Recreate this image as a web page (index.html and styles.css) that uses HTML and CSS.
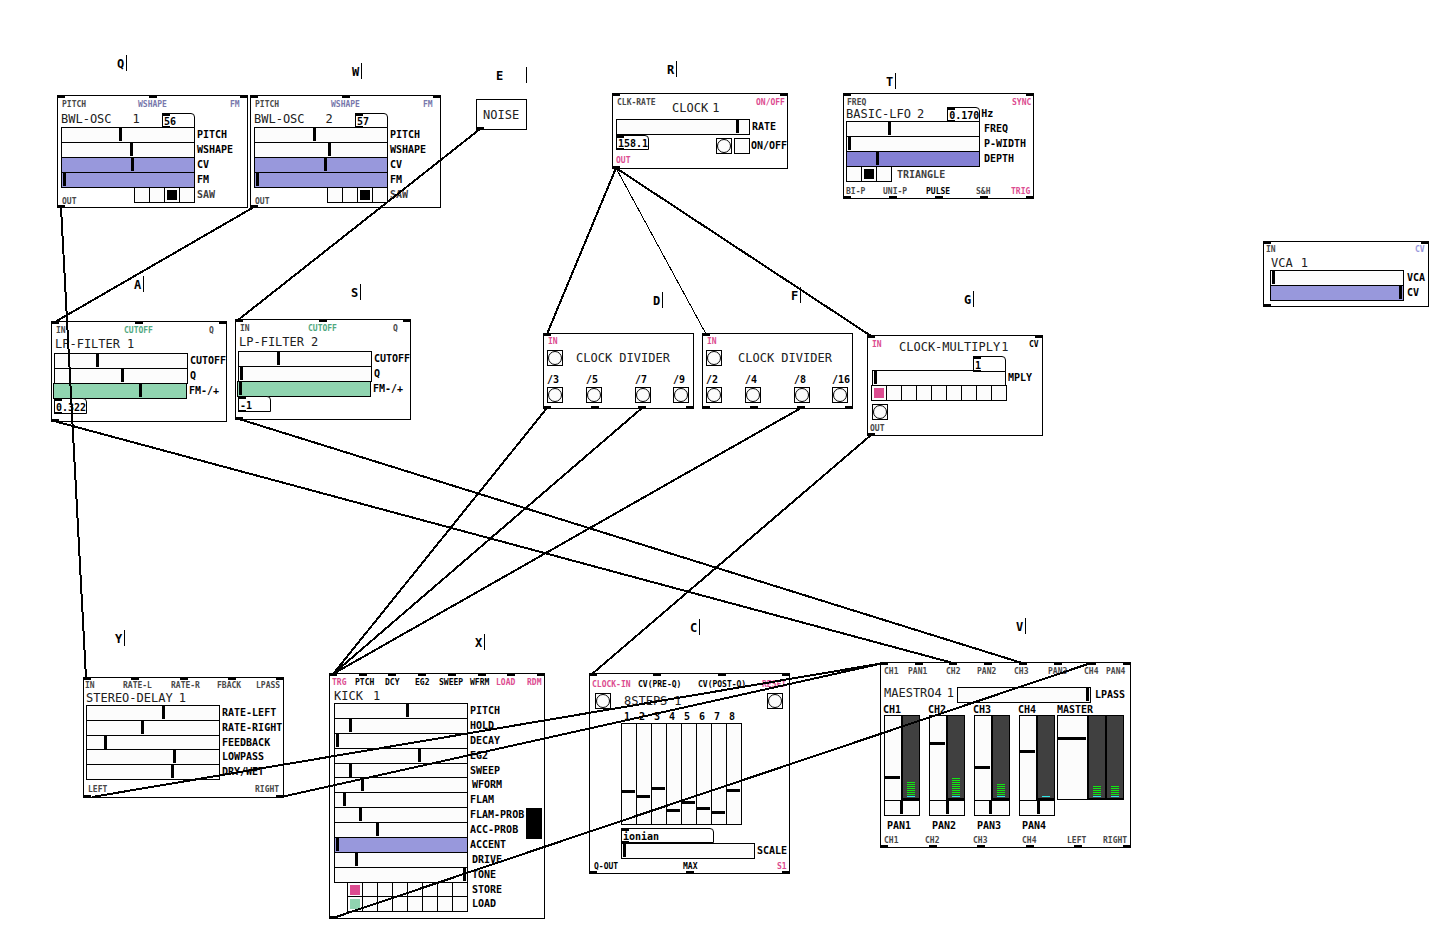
FILE: index.html
```html
<!DOCTYPE html>
<html lang="en">
<head>
<meta charset="utf-8">
<title>Modular patch</title>
<link rel="stylesheet" href="styles.css">
</head>
<body>
<main class="canvas">

<span class="key key-q">Q</span>
<span class="key key-w">W</span>
<span class="key key-e">E</span>
<span class="key key-r">R</span>
<span class="key key-t">T</span>
<span class="key key-a">A</span>
<span class="key key-s">S</span>
<span class="key key-d">D</span>
<span class="key key-f">F</span>
<span class="key key-g">G</span>
<span class="key key-y">Y</span>
<span class="key key-x">X</span>
<span class="key key-c">C</span>
<span class="key key-v">V</span>

<section class="module osc osc-1">
  <div class="ports"><i></i><i></i><i></i></div>
  <div class="names"><span>PITCH</span><span class="blue">WSHAPE</span><span class="blue">FM</span></div>
  <div class="head"><h2>BWL-OSC<b>1</b></h2><span class="num"><input type="text" value="56" aria-label="Pitch value"></span></div>
  <label class="row"><input type="range" max="129" value="57">PITCH</label>
  <label class="row"><input type="range" max="129" value="68">WSHAPE</label>
  <label class="row"><input type="range" class="violet" max="129" value="69">CV</label>
  <label class="row"><input type="range" class="violet" max="129" value="1">FM</label>
  <div class="wave"><span class="out">OUT</span><span class="cells"><input type="radio" name="w1" aria-label="Sine"><input type="radio" name="w1" aria-label="Triangle"><input type="radio" name="w1" aria-label="Saw" checked><input type="radio" name="w1" aria-label="Square"></span><span class="gray">SAW</span></div>
  <div class="ports bottom"><i></i></div>
</section>

<section class="module osc osc-2">
  <div class="ports"><i></i><i></i><i></i></div>
  <div class="names"><span>PITCH</span><span class="blue">WSHAPE</span><span class="blue">FM</span></div>
  <div class="head"><h2>BWL-OSC<b>2</b></h2><span class="num"><input type="text" value="57" aria-label="Pitch value"></span></div>
  <label class="row"><input type="range" max="129" value="58">PITCH</label>
  <label class="row"><input type="range" max="129" value="73">WSHAPE</label>
  <label class="row"><input type="range" class="violet" max="129" value="69">CV</label>
  <label class="row"><input type="range" class="violet" max="129" value="1">FM</label>
  <div class="wave"><span class="out">OUT</span><span class="cells"><input type="radio" name="w2" aria-label="Sine"><input type="radio" name="w2" aria-label="Triangle"><input type="radio" name="w2" aria-label="Saw" checked><input type="radio" name="w2" aria-label="Square"></span><span class="gray">SAW</span></div>
  <div class="ports bottom"><i></i></div>
</section>

<section class="module noise">
  <h2>NOISE</h2>
  <div class="ports bottom"><i></i></div>
</section>

<section class="module clock">
  <div class="ports"><i></i><i></i></div>
  <div class="names"><span>CLK-RATE</span><h2>CLOCK<b>1</b></h2><span class="pink">ON/OFF</span></div>
  <label class="row"><input type="range" max="129" value="119">RATE</label>
  <div class="switches"><span class="num"><input type="text" value="158.1" aria-label="Rate value"></span><button class="bang" aria-label="Bang"></button><label><input type="checkbox">ON/OFF</label></div>
  <div class="names foot"><span class="pink">OUT</span></div>
  <div class="ports bottom"><i></i></div>
</section>

<section class="module lfo">
  <div class="ports"><i></i><i></i></div>
  <div class="names"><span>FREQ</span><span class="pink">SYNC</span></div>
  <div class="head"><h2>BASIC-LFO<b>2</b></h2><span class="num"><input type="text" id="hz" value="0.170"></span><label for="hz">Hz</label></div>
  <label class="row"><input type="range" max="129" value="41">FREQ</label>
  <label class="row"><input type="range" max="129" value="1">P-WIDTH</label>
  <label class="row"><input type="range" class="indigo" max="129" value="29">DEPTH</label>
  <div class="wave"><span class="cells"><input type="radio" name="w3" aria-label="Sine"><input type="radio" name="w3" aria-label="Triangle" checked><input type="radio" name="w3" aria-label="Square"></span><span class="gray">TRIANGLE</span></div>
  <div class="names foot"><span>BI-P</span><span>UNI-P</span><span class="black">PULSE</span><span>S&amp;H</span><span class="pink">TRIG</span></div>
  <div class="ports bottom"><i></i><i></i><i></i><i></i><i></i></div>
</section>

<section class="module vca">
  <div class="ports"><i></i><i></i></div>
  <div class="names"><span>IN</span><span class="lilac">CV</span></div>
  <div class="head"><h2>VCA<b>1</b></h2></div>
  <label class="row"><input type="range" max="129" value="1">VCA</label>
  <label class="row"><input type="range" class="violet" max="129" value="128">CV</label>
  <div class="ports bottom"><i></i></div>
</section>

<section class="module lpf lpf-1">
  <div class="ports"><i></i><i></i><i></i></div>
  <div class="names"><span>IN</span><span class="green">CUTOFF</span><span>Q</span></div>
  <div class="head"><h2>LP-FILTER<b>1</b></h2></div>
  <label class="row"><input type="range" max="129" value="41">CUTOFF</label>
  <label class="row"><input type="range" max="129" value="66">Q</label>
  <label class="row outdent"><input type="range" class="mint" max="129" value="85">FM-/+</label>
  <span class="num"><input type="text" value="0.322" aria-label="FM amount"></span>
  <div class="ports bottom"><i></i></div>
</section>

<section class="module lpf lpf-2">
  <div class="ports"><i></i><i></i><i></i></div>
  <div class="names"><span>IN</span><span class="green">CUTOFF</span><span>Q</span></div>
  <div class="head"><h2>LP-FILTER<b>2</b></h2></div>
  <label class="row"><input type="range" max="129" value="38">CUTOFF</label>
  <label class="row"><input type="range" max="129" value="1">Q</label>
  <label class="row outdent"><input type="range" class="mint" max="129" value="1">FM-/+</label>
  <span class="num"><input type="text" value="-1" aria-label="FM amount"></span>
  <div class="ports bottom"><i></i></div>
</section>

<section class="module div div-1">
  <div class="ports"><i></i></div>
  <div class="names"><span class="pink">IN</span></div>
  <div class="title"><button class="bang" aria-label="In"></button><h2>CLOCK DIVIDER</h2></div>
  <div class="taps"><span>/3<button class="bang" aria-label="/3"></button></span><span>/5<button class="bang" aria-label="/5"></button></span><span>/7<button class="bang" aria-label="/7"></button></span><span>/9<button class="bang" aria-label="/9"></button></span></div>
  <div class="ports bottom"><i></i><i></i><i></i><i></i></div>
</section>

<section class="module div div-2">
  <div class="ports"><i></i></div>
  <div class="names"><span class="pink">IN</span></div>
  <div class="title"><button class="bang" aria-label="In"></button><h2>CLOCK DIVIDER</h2></div>
  <div class="taps"><span>/2<button class="bang" aria-label="/2"></button></span><span>/4<button class="bang" aria-label="/4"></button></span><span>/8<button class="bang" aria-label="/8"></button></span><span>/16<button class="bang" aria-label="/16"></button></span></div>
  <div class="ports bottom"><i></i><i></i><i></i><i></i></div>
</section>

<section class="module mult">
  <div class="ports"><i></i><i></i></div>
  <div class="names"><span class="pink">IN</span><h2>CLOCK-MULTIPLY<b>1</b></h2><span class="black">CV</span></div>
  <span class="num"><input type="text" value="1" aria-label="Multiplier"></span>
  <label class="row"><input type="range" max="129" value="1">MPLY</label>
  <div class="cells pinkdot"><input type="radio" name="m" aria-label="1" checked><input type="radio" name="m" aria-label="2"><input type="radio" name="m" aria-label="3"><input type="radio" name="m" aria-label="4"><input type="radio" name="m" aria-label="5"><input type="radio" name="m" aria-label="6"><input type="radio" name="m" aria-label="7"><input type="radio" name="m" aria-label="8"><input type="radio" name="m" aria-label="9"></div>
  <button class="bang" aria-label="Bang"></button>
  <div class="names foot"><span>OUT</span></div>
  <div class="ports bottom"><i></i></div>
</section>

<section class="module delay">
  <div class="ports"><i></i><i></i><i></i><i></i><i></i></div>
  <div class="names"><span>IN</span><span>RATE-L</span><span>RATE-R</span><span>FBACK</span><span>LPASS</span></div>
  <div class="head"><h2>STEREO-DELAY<b>1</b></h2></div>
  <label class="row"><input type="range" max="129" value="75">RATE-LEFT</label>
  <label class="row"><input type="range" max="129" value="54">RATE-RIGHT</label>
  <label class="row tight"><input type="range" max="129" value="17">FEEDBACK</label>
  <label class="row"><input type="range" max="129" value="86">LOWPASS</label>
  <label class="row"><input type="range" max="129" value="84">DRY/WET</label>
  <div class="names foot"><span>LEFT</span><span>RIGHT</span></div>
  <div class="ports bottom"><i></i><i></i></div>
</section>

<section class="module kick">
  <div class="ports"><i></i><i></i><i></i><i></i><i></i><i></i><i></i><i></i></div>
  <div class="names dark"><span class="pink">TRG</span><span>PTCH</span><span>DCY</span><span>EG2</span><span>SWEEP</span><span>WFRM</span><span class="pink">LOAD</span><span class="pink">RDM</span></div>
  <div class="head"><h2>KICK<b>1</b></h2></div>
  <div class="body">
    <div class="stack">
      <label class="row"><input type="range" max="129" value="71">PITCH</label>
      <label class="row"><input type="range" max="129" value="14">HOLD</label>
      <label class="row"><input type="range" max="129" value="1">DECAY</label>
      <label class="row"><input type="range" max="129" value="83">EG2</label>
      <label class="row tight"><input type="range" max="129" value="14">SWEEP</label>
      <label class="row wide"><input type="range" max="129" value="26">WFORM</label>
      <label class="row"><input type="range" max="129" value="8">FLAM</label>
      <label class="row"><input type="range" max="129" value="24">FLAM-PROB</label>
      <label class="row"><input type="range" max="129" value="41">ACC-PROB</label>
      <label class="row"><input type="range" class="violet" max="129" value="1">ACCENT</label>
      <label class="row wide"><input type="range" max="129" value="20">DRIVE</label>
      <label class="row wide"><input type="range" max="129" value="128">TONE</label>
      <div class="row wide tight slots"><span class="cells pinkdot"><input type="radio" name="st" aria-label="Store 1" checked><input type="radio" name="st" aria-label="Store 2"><input type="radio" name="st" aria-label="Store 3"><input type="radio" name="st" aria-label="Store 4"><input type="radio" name="st" aria-label="Store 5"><input type="radio" name="st" aria-label="Store 6"><input type="radio" name="st" aria-label="Store 7"><input type="radio" name="st" aria-label="Store 8"></span>STORE</div>
      <div class="row wide slots"><span class="cells mintdot"><input type="radio" name="ld" aria-label="Load 1" checked><input type="radio" name="ld" aria-label="Load 2"><input type="radio" name="ld" aria-label="Load 3"><input type="radio" name="ld" aria-label="Load 4"><input type="radio" name="ld" aria-label="Load 5"><input type="radio" name="ld" aria-label="Load 6"><input type="radio" name="ld" aria-label="Load 7"><input type="radio" name="ld" aria-label="Load 8"></span>LOAD</div>
    </div>
    <div class="block"></div>
  </div>
  <div class="ports bottom"><i></i></div>
</section>

<section class="module seq">
  <div class="ports"><i></i><i></i><i></i><i></i></div>
  <div class="names dark"><span class="pink">CLOCK-IN</span><span>CV(PRE-Q)</span><span>CV(POST-Q)</span><span class="pink">RESET</span></div>
  <div class="title"><button class="bang" aria-label="Clock in"></button><h2>8STEPS<b>1</b></h2><button class="bang" aria-label="Reset"></button></div>
  <div class="steps">
    <label>1<input type="range" class="vert" max="97" value="31"></label>
    <label>2<input type="range" class="vert" max="97" value="26"></label>
    <label>3<input type="range" class="vert" max="97" value="34"></label>
    <label>4<input type="range" class="vert" max="97" value="12"></label>
    <label>5<input type="range" class="vert" max="97" value="20"></label>
    <label>6<input type="range" class="vert" max="97" value="14"></label>
    <label>7<input type="range" class="vert" max="97" value="10"></label>
    <label>8<input type="range" class="vert" max="97" value="32"></label>
  </div>
  <div class="scale">
    <span class="num"><input type="text" value="ionian" aria-label="Scale name"></span>
    <label class="row"><input type="range" max="129" value="1">SCALE</label>
  </div>
  <div class="names dark foot"><span>Q-OUT</span><span>MAX</span><span class="pink">S1</span></div>
  <div class="ports bottom"><i></i><i></i><i></i></div>
</section>

<section class="module mixer">
  <div class="ports"><i></i><i></i><i></i><i></i><i></i><i></i><i></i><i></i></div>
  <div class="names"><span>CH1</span><span>PAN1</span><span>CH2</span><span>PAN2</span><span>CH3</span><span>PAN3</span><span>CH4</span><span>PAN4</span></div>
  <div class="head"><h2>MAESTRO4<b>1</b></h2><label class="row"><input type="range" max="129" value="128">LPASS</label></div>
  <div class="strips">
    <div class="strip"><label for="c1">CH1</label><div class="pair"><input type="range" class="vert" id="c1" max="81" value="21"><span class="vu"><i style="--level:7"></i></span></div><input type="range" class="pan" id="p1" max="31" value="15"><label for="p1" class="panname">PAN1</label></div>
    <div class="strip"><label for="c2">CH2</label><div class="pair"><input type="range" class="vert" id="c2" max="81" value="55"><span class="vu"><i style="--level:9"></i></span></div><input type="range" class="pan" id="p2" max="31" value="16"><label for="p2" class="panname">PAN2</label></div>
    <div class="strip"><label for="c3">CH3</label><div class="pair"><input type="range" class="vert" id="c3" max="81" value="31"><span class="vu"><i style="--level:6"></i></span></div><input type="range" class="pan" id="p3" max="31" value="14"><label for="p3" class="panname">PAN3</label></div>
    <div class="strip"><label for="c4">CH4</label><div class="pair"><input type="range" class="vert" id="c4" max="81" value="47"><span class="vu"><i style="--level:0"></i></span></div><input type="range" class="pan" id="p4" max="31" value="17"><label for="p4" class="panname">PAN4</label></div>
    <div class="strip master"><label for="ms">MASTER</label><div class="pair"><input type="range" class="vert" id="ms" max="80" value="59"><span class="vu"><i style="--level:5"></i></span><span class="vu"><i style="--level:5"></i></span></div></div>
  </div>
  <div class="names foot"><span>CH1</span><span>CH2</span><span>CH3</span><span>CH4</span><span>LEFT</span><span>RIGHT</span></div>
  <div class="ports bottom"><i></i><i></i><i></i><i></i><i></i><i></i></div>
</section>

<svg class="wires" aria-hidden="true">
  <path d="M61 207L86 678M254 207L55 322M480 129L238 320M616 168L547 334M616 168L871 336M54 421L953 663M239 419L1022 663M547 408L333 674M642 408L333 674M801 408L333 674M871 435L592 674M92 797L884 663M281 797L884 663M333 918L1091 663"/>
  <path class="thin" d="M616 168L706 334"/>
</svg>
</main>
</body>
</html>
```
FILE: styles.css
```css
*, *::before, *::after { box-sizing: border-box; }
body { margin: 0; background: #fff; }
.canvas {
  position: relative;
  min-height: 100vh;
  overflow: hidden;
  font: bold 10px/16px "DejaVu Sans Mono", monospace;
  color: #000;
  white-space: nowrap;
}
h2 { margin: 0; font-size: 12px; font-weight: normal; line-height: 16px; color: #202020; display: flex; gap: 6px; }
h2 b { font-weight: normal; }

/* objects placed on the patch canvas */
.key { position: absolute; width: 10px; height: 16px; font-size: 12px; line-height: 18px; border-right: 1px solid #000; }
.key-q { left: 117px; top: 55px; }
.key-w { left: 352px; top: 63px; }
.key-e { left: 496px; top: 67px; width: 31px; }
.key-r { left: 667px; top: 61px; }
.key-t { left: 886px; top: 73px; }
.key-a { left: 134px; top: 276px; }
.key-s { left: 351px; top: 284px; }
.key-d { left: 653px; top: 292px; }
.key-f { left: 791px; top: 287px; }
.key-g { left: 964px; top: 291px; }
.key-y { left: 115px; top: 630px; }
.key-x { left: 475px; top: 634px; }
.key-c { left: 690px; top: 619px; }
.key-v { left: 1016px; top: 618px; }

.module {
  position: absolute;
  display: flex;
  flex-direction: column;
  align-items: flex-start;
  border: 1px solid #000;
  background: #fff;
}
.module > * { flex-shrink: 0; }
.osc { width: 191px; height: 113px; padding-left: 3px; }
.osc-1 { left: 57px; top: 95px; }
.osc-2 { left: 250px; top: 95px; }
.noise { left: 476px; top: 99px; width: 51px; height: 31px; }
.clock { left: 612px; top: 93px; width: 176px; height: 76px; padding-left: 3px; }
.lfo { left: 843px; top: 93px; width: 191px; height: 106px; padding-left: 2px; }
.vca { left: 1263px; top: 241px; width: 166px; height: 66px; padding-left: 6px; }
.lpf { width: 176px; height: 101px; padding-left: 2px; }
.lpf-1 { left: 51px; top: 321px; }
.lpf-2 { left: 235px; top: 319px; }
.div { width: 151px; height: 76px; padding-left: 3px; }
.div-1 { left: 543px; top: 333px; }
.div-2 { left: 702px; top: 333px; }
.mult { left: 867px; top: 335px; width: 176px; height: 101px; padding-left: 4px; }
.delay { left: 83px; top: 677px; width: 201px; height: 121px; padding-left: 2px; }
.kick { left: 329px; top: 673px; width: 216px; height: 246px; padding-left: 4px; }
.seq { left: 589px; top: 673px; width: 201px; height: 201px; padding-left: 5px; }
.mixer { left: 880px; top: 662px; width: 251px; height: 186px; padding-left: 3px; }

.wires { position: absolute; inset: 0; width: 100%; height: 100%; pointer-events: none; }
.wires path { fill: none; stroke: #000; stroke-width: 2px; shape-rendering: crispEdges; }
.wires .thin { stroke-width: 1px; }

/* inlets and outlets */
.ports { position: absolute; left: -1px; right: -1px; top: -1px; display: flex; justify-content: space-between; }
.ports i { width: 8px; height: 3px; background: #000; }
.ports.bottom { top: auto; bottom: -1px; }

.names { display: grid; width: 100%; margin: 3px 0 -1px; font-size: 8px; line-height: 12px; color: #484848; }
.names.foot { margin: 0; }
.names.dark { color: #000; }
.names .blue { color: #7878ac; }
.names .pink { color: #dc4c90; }
.names .green { color: #50a880; }
.names .lilac { color: #9898dc; }
.names .black { color: #000; }
.gray { color: #404040; }

.head { display: flex; height: 17px; align-items: center; }

/* sliders */
input { margin: 0; font: inherit; color: inherit; }
.row { display: flex; gap: 2px; height: 15px; }
.row.tight { height: 14px; }
.row.wide { gap: 4px; }
input[type="range"] {
  appearance: none;
  flex: none;
  width: 134px;
  height: 16px;
  padding-bottom: 1px;
  border: 1px solid #000;
  border-radius: 0;
  background: #fcfcfc;
}
input[type="range"]::-webkit-slider-thumb { appearance: none; width: 3px; height: 13px; border: 0; border-radius: 0; background: #000; }
input[type="range"].violet { background: #9898dc; }
input[type="range"].indigo { background: #8480d4; }
input[type="range"].mint { background: #90d4b0; }
input[type="range"].vert { writing-mode: vertical-lr; direction: rtl; padding: 0 1px 0 0; width: 16px; height: 102px; }
input[type="range"].vert::-webkit-slider-thumb { width: 13px; height: 3px; }

/* number boxes */
.num { position: relative; flex: none; display: block; width: 33px; height: 15px; }
.num input {
  display: block;
  width: 100%;
  height: 100%;
  padding: 2px 0 0 1px;
  border: 1px solid #000;
  border-radius: 0 4px 0 0;
  background: #fff;
}
.num::before, .num::after { content: ""; position: absolute; left: 0; top: 0; width: 8px; height: 3px; background: #000; z-index: 1; }
.num::after { top: auto; bottom: 0; height: 2px; }

/* radio strips, toggles, bangs */
.cells { display: flex; height: 16px; }
.cells input, input[type="checkbox"] {
  appearance: none;
  flex: none;
  width: 16px;
  height: 16px;
  padding: 2px;
  border: 1px solid #000;
  background: #fcfcfc;
}
.cells input + input { margin-left: -1px; }
.cells input:checked { background: linear-gradient(#000, #000) content-box, #fcfcfc; }
.cells.pinkdot input:checked { background: linear-gradient(#dc4c90, #dc4c90) content-box, #fcfcfc; }
.cells.mintdot input:checked { background: linear-gradient(#90d4b0, #90d4b0) content-box, #fcfcfc; }
.bang { flex: none; display: block; width: 16px; height: 16px; padding: 0; border: 1px solid #000; background: #fcfcfc; }
.bang::before { content: ""; display: block; width: 14px; height: 14px; border: 1px solid #000; border-radius: 50%; }
.wave { display: flex; gap: 2px; }

/* oscillators */
.osc .names { padding-left: 1px; grid-template-columns: 76px 92px 1fr; }
.osc .head { width: 134px; justify-content: space-between; }
.osc h2 b { margin-left: 15px; }
.head .num { align-self: flex-end; margin-bottom: -1px; }
.osc .out { width: 71px; height: 18px; padding: 11px 0 0 1px; font-size: 8px; line-height: 8px; color: #484848; }

.noise h2 { margin: 7px 0 0 6px; }

/* clock */
.clock .names { padding-left: 1px; grid-template-columns: 55px 84px 1fr; }
.clock .names:not(.foot) { height: 23px; }
.clock h2 { margin-top: 3px; gap: 4px; }
.clock .switches { display: flex; margin-top: 1px; height: 18px; }
.switches .bang { margin: 3px 2px 0 67px; }
.switches label { display: flex; gap: 1px; padding-top: 3px; }
.clock .foot { margin: 2px 0 0 -1px; }

/* low frequency oscillator */
.lfo .names { padding-left: 1px; grid-template-columns: 165px 1fr; }
.lfo .head { height: 14px; margin-top: -1px; }
.lfo .head .num { margin-left: 23px; }
.lfo .head label { padding-left: 1px; }
.lfo .row { gap: 4px; }
.lfo .wave { gap: 5px; }
.lfo .wave .gray { line-height: 18px; height: 16px; }
.lfo .foot { padding: 4px 0 0; grid-template-columns: 37px 43px 50px 35px 1fr; }

.vca .names { margin: 2px 0 0 -4px; grid-template-columns: 149px 1fr; }
.vca .head { height: 14px; padding-left: 1px; }
.vca h2 { gap: 8px; }
.vca .row { gap: 3px; }

/* low pass filters */
.lpf .names { padding-left: 2px; grid-template-columns: 68px 85px 1fr; }
.lpf .head { padding-left: 1px; align-items: flex-start; }
.lpf h2 { gap: 7px; }
.lpf .outdent { margin-left: -1px; }
.lpf .num { height: 16px; }

/* clock dividers */
.div .names { margin: 2px 0 0; padding-left: 1px; }
.div .title { display: flex; gap: 13px; margin-top: 2px; }
.div-2 .title { gap: 16px; }
.taps { display: grid; grid-template-columns: 39px 49px 38px 20px; margin-top: 6px; }
.taps .bang { margin-top: -1px; }

/* clock multiplier */
.mult .names:not(.foot) { grid-template-columns: 27px 130px 1fr; height: 19px; }
.mult h2 { gap: 1px; }
.mult .num { margin: -1px 0 -2px 101px; height: 16px; }
.mult .cells { margin-left: -1px; }
.mult > .bang { margin-top: 3px; }
.mult .foot { margin: 3px 0 0 -2px; }

/* stereo delay */
.delay .names { margin: 2px 0 -1px -1px; grid-template-columns: 38px 48px 46px 39px 1fr; }
.delay .head { height: 14px; }
.delay .foot { margin: 5px 0 0; padding-left: 2px; grid-template-columns: 167px 1fr; }

/* kick drum */
.kick .names { margin-left: -2px; grid-template-columns: 23px 30px 30px 24px 31px 26px 31px 1fr; }
.kick .head { height: 15px; }
.kick h2 { gap: 10px; margin-top: 1px; }
.kick .body { display: flex; }
.kick .stack { width: 192px; }
.kick .slots .cells { padding-left: 13px; }
.kick .block { width: 16px; height: 31px; margin-top: 105px; background: #000; }

/* eight step sequencer */
.seq .names { margin: 5px 0 0 -3px; grid-template-columns: 46px 60px 64px 1fr; }
.seq .title { display: flex; width: 188px; margin-top: 2px; }
.seq h2 { gap: 7px; width: 143px; margin-left: 13px; }
.steps { display: flex; margin-left: 26px; }
.steps label { width: 15px; height: 116px; padding-left: 3px; }
.steps input { display: block; margin: -2px 0 0 -3px; }
.scale { margin: 3px 0 0 26px; }
.scale .num { width: 93px; }
.seq .foot { margin: 3px 0 0 -1px; grid-template-columns: 89px 94px 1fr; }

/* mixer */
.mixer .names { grid-template-columns: 24px 38px 31px 37px 34px 36px 22px 1fr; }
.mixer .head { height: 27px; align-items: flex-start; padding-top: 8px; }
.mixer .head h2 { width: 73px; gap: 5px; }
.mixer .head .row { gap: 4px; height: 16px; margin-top: 2px; }
.strips { display: flex; gap: 9px; }
.strip { width: 36px; display: flex; flex-direction: column; }
.strip > label { line-height: 12px; height: 11px; margin-left: -1px; }
.strip .pair { display: flex; height: 86px; }
.strip input[type="range"].vert { width: 18px; height: 86px; }
.strip input[type="range"].vert::-webkit-slider-thumb { width: 15px; }
.strip input[type="range"].pan { width: 36px; margin-top: -1px; }
.strip > .panname { height: 16px; margin: 2px 0 0 3px; line-height: 16px; }
.vu { display: flex; flex-direction: column; justify-content: flex-end; width: 18px; height: 86px; padding: 0 3px 1px 4px; border: 1px solid #000; border-bottom-width: 3px; background: #404040; }
.vu::after { content: ""; flex: none; height: 1px; background: #30e8e8; margin-right: 1px; }
.vu i { flex: none; height: calc(var(--level) * 2px); margin-right: 1px; background: repeating-linear-gradient(#10e810 0 1px, transparent 1px 2px); }
.strip.master { width: 67px; margin-left: -7px; }
.master > label { margin-left: 0; }
.master .pair { height: 85px; }
.strip.master input[type="range"].vert { width: 31px; height: 85px; }
.strip.master input[type="range"].vert::-webkit-slider-thumb { width: 28px; }
.master .vu { height: 85px; border-bottom-width: 2px; }
.mixer .foot { margin-top: 1px; grid-template-columns: 41px 48px 49px 45px 36px 1fr; }
```
